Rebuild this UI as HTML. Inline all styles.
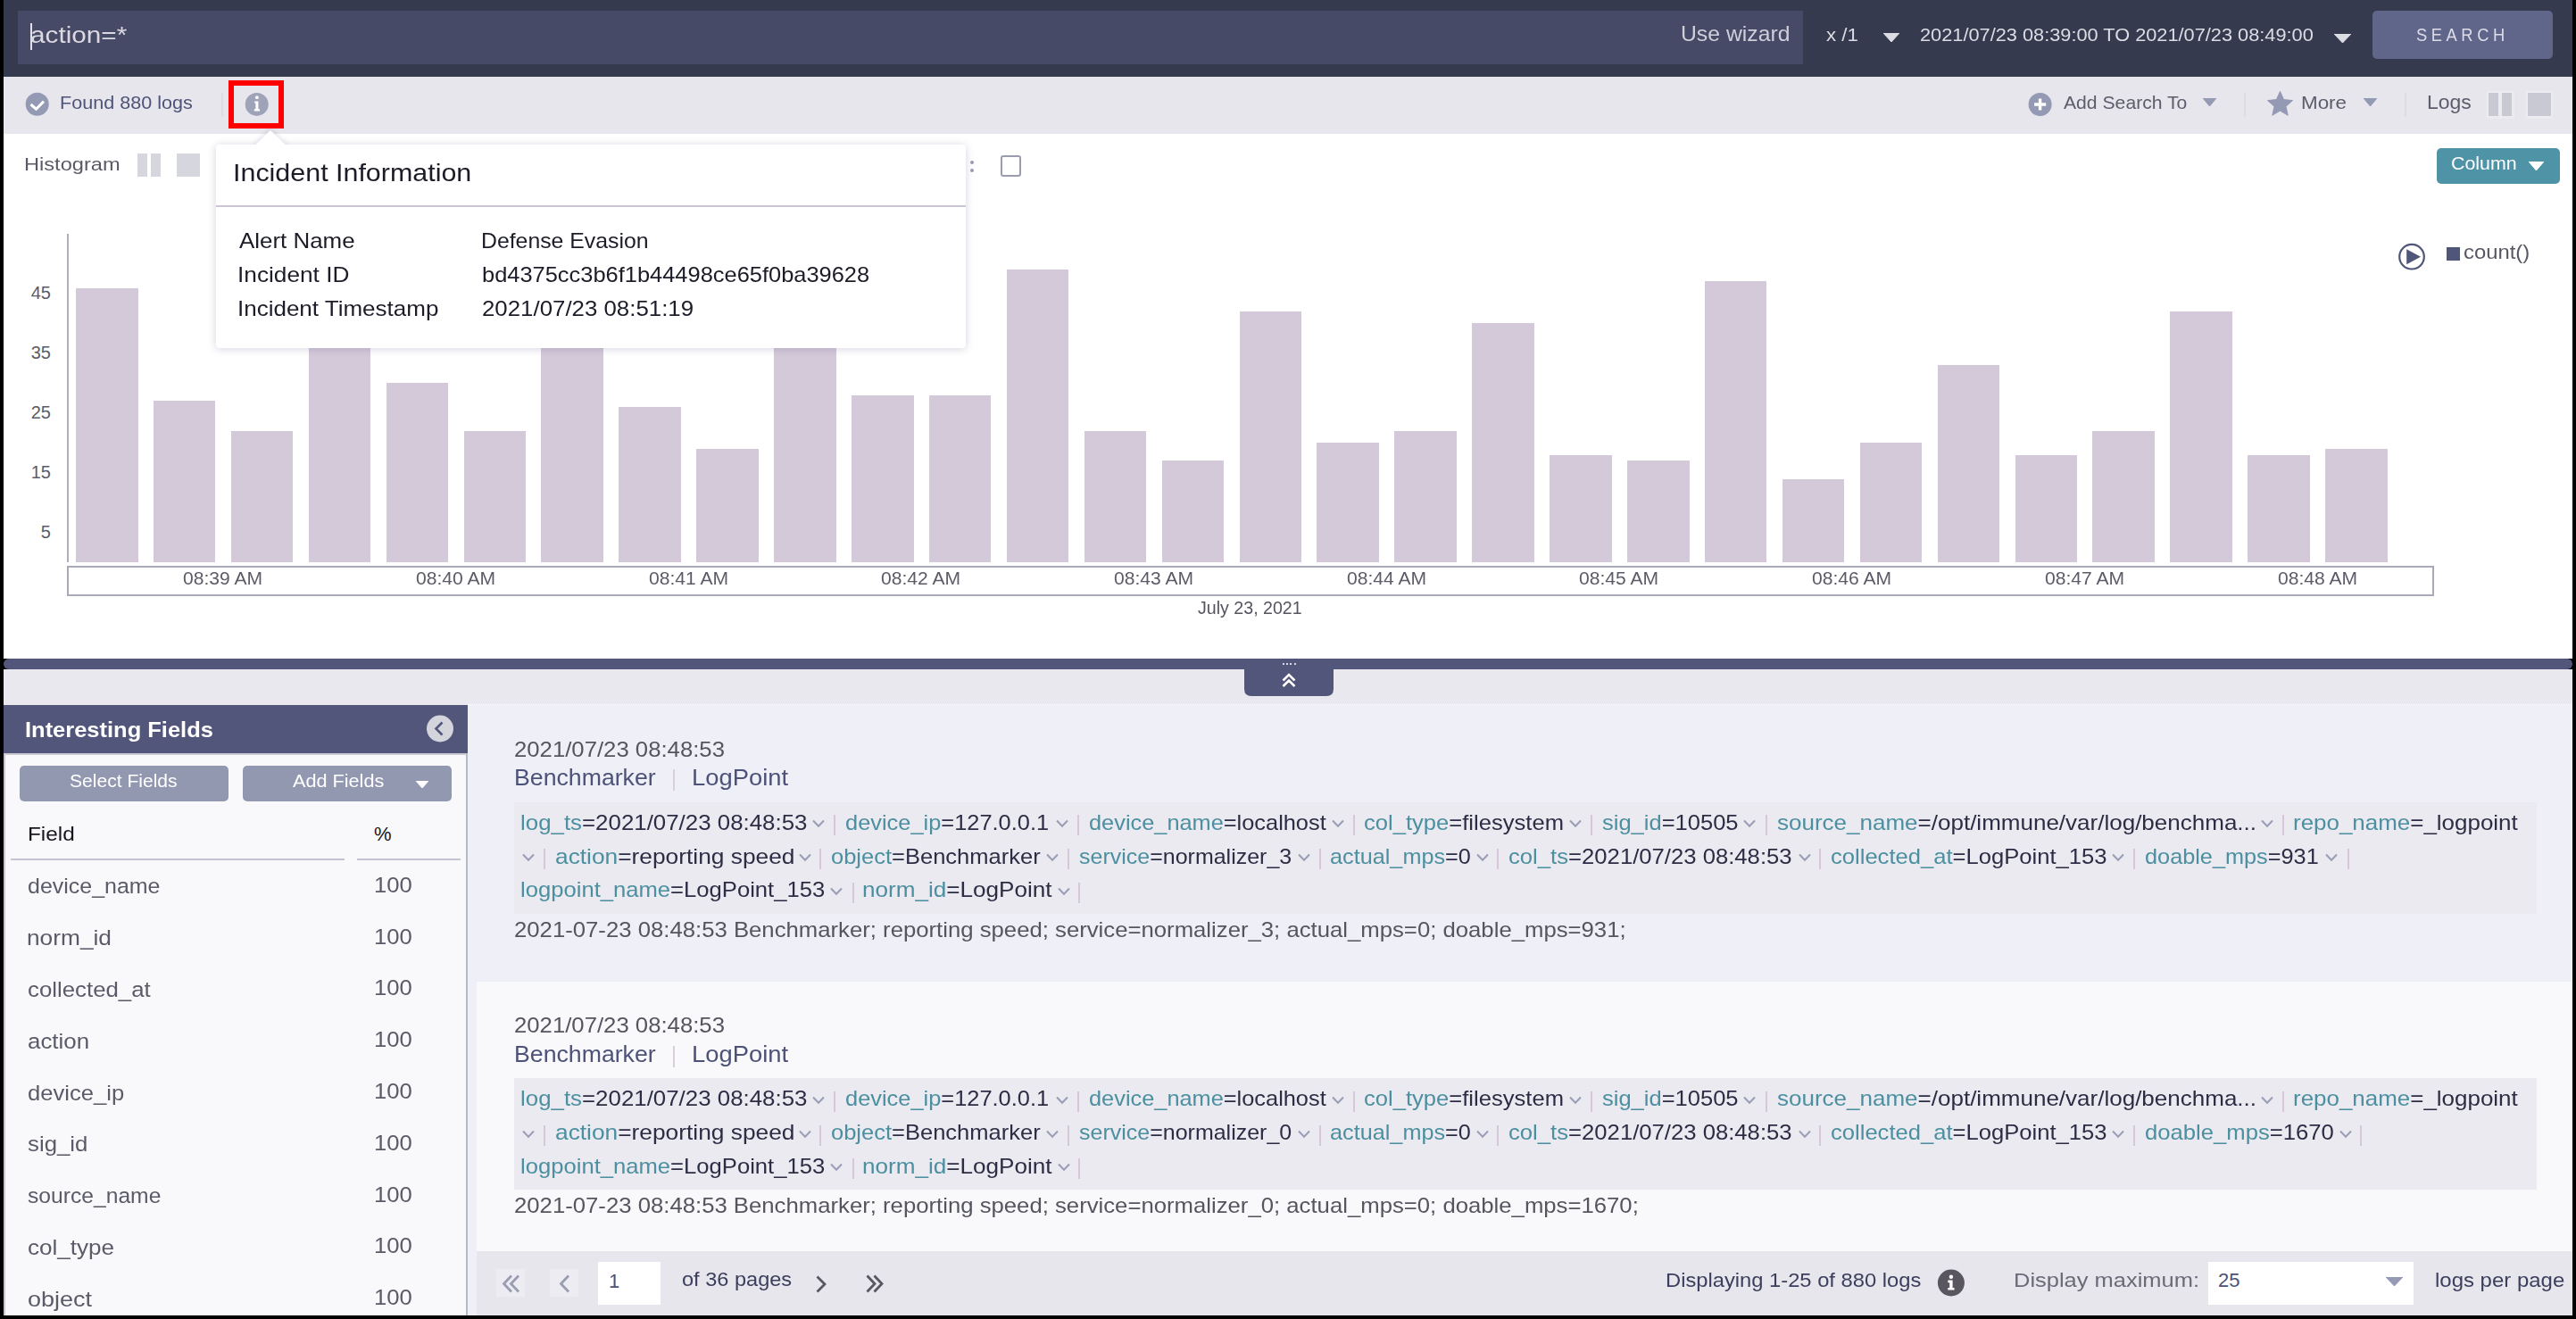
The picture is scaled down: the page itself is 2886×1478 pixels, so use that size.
<!DOCTYPE html>
<html><head><meta charset="utf-8"><style>
html,body{margin:0;padding:0;width:2886px;height:1478px;overflow:hidden;background:#000}
body>div,body>svg{position:absolute;box-sizing:content-box}
body>div{white-space:pre;font-family:'Liberation Sans', sans-serif}
</style></head><body>
<div style="left:0px;top:0px;width:2886px;height:1478px;background:#000;"></div>
<div style="left:4px;top:0px;width:2878px;height:86px;background:#363a4f;"></div>
<div style="left:20px;top:12px;width:2000px;height:60px;background:#464a66;"></div>
<div style="left:34px;top:26px;width:2px;height:30px;background:#e4e0ea;"></div>
<div style="left:34.31px;top:26.85px;font-size:25px;line-height:25px;color:#dcd8e2;font-weight:400;transform:scaleX(1.1889);transform-origin:0 0;">action=*</div>
<div style="left:1882.94px;top:25.70px;font-size:24px;line-height:24px;color:#cfcfda;font-weight:400;transform:scaleX(1.0313);transform-origin:0 0;">Use wizard</div>
<div style="left:2045.50px;top:29.08px;font-size:20px;line-height:20px;color:#dcdce4;font-weight:400;transform:scaleX(1.1129);transform-origin:0 0;">x /1</div>
<svg style="left:2110px;top:37px" width="18" height="10" viewBox="0 0 18 10"><path d="M0 0 L18 0 L9.0 10 Z" fill="#dcdce4" stroke="#dcdce4" stroke-width="1" stroke-linejoin="round"/></svg>
<div style="left:2151.41px;top:29.08px;font-size:20px;line-height:20px;color:#dcdce4;font-weight:400;transform:scaleX(1.0879);transform-origin:0 0;">2021/07/23 08:39:00 TO 2021/07/23 08:49:00</div>
<svg style="left:2615px;top:38px" width="19" height="10" viewBox="0 0 19 10"><path d="M0 0 L19 0 L9.5 10 Z" fill="#dcdce4" stroke="#dcdce4" stroke-width="1" stroke-linejoin="round"/></svg>
<div style="left:2658px;top:12px;width:202px;height:54px;background:#60668a;border-radius:5px"></div>
<div style="left:2707.08px;top:29.38px;font-size:20px;line-height:20px;color:#dcdce8;font-weight:400;transform:scaleX(0.9151);transform-origin:0 0;letter-spacing:5px">SEARCH</div>
<div style="left:4px;top:86px;width:2878px;height:64px;background:#e6e6ec;"></div>
<svg style="left:28px;top:103px" width="28" height="28" viewBox="0 0 28 28"><circle cx="13.7" cy="13.8" r="13" fill="#9499b4"/><path d="M6.5 14 L12.5 19.2 L21 10.6" fill="none" stroke="#fff" stroke-width="3"/></svg>
<div style="left:66.84px;top:105.08px;font-size:20px;line-height:20px;color:#4e5377;font-weight:400;transform:scaleX(1.0785);transform-origin:0 0;">Found 880 logs</div>
<div style="left:248px;top:104px;width:1.5px;height:27px;background:#dcdce3;"></div>
<svg style="left:274px;top:103px" width="28" height="28" viewBox="0 0 28 28"><circle cx="13.7" cy="13.9" r="13" fill="#9ea3b9"/><circle cx="13.9" cy="6.2" r="1.9" fill="#fff"/><path d="M11.2 10.4 H15.4 V19.2 H17 V21.4 H10.8 V19.2 H12.4 V12.4 H11.2 Z" fill="#fff"/></svg>
<div style="left:256px;top:90px;width:50px;height:42px;border:6px solid #ff0000"></div>
<svg style="left:2272px;top:104px" width="28" height="28" viewBox="0 0 28 28"><circle cx="13.6" cy="13" r="13" fill="#9499b4"/><path d="M13.6 6.5 V19.5 M7 13 H20.2" stroke="#fff" stroke-width="3.4"/></svg>
<div style="left:2312.00px;top:104.23px;font-size:21px;line-height:21px;color:#5c5c6c;font-weight:400;transform:scaleX(1.0073);transform-origin:0 0;">Add Search To</div>
<svg style="left:2468px;top:110px" width="15" height="9" viewBox="0 0 15 9"><path d="M0 0 L15 0 L7.5 9 Z" fill="#9499b4" stroke="#9499b4" stroke-width="1" stroke-linejoin="round"/></svg>
<div style="left:2514px;top:104px;width:1.5px;height:27px;background:#dcdce3;"></div>
<svg style="left:2539px;top:101px" width="31" height="31" viewBox="0 0 31 31"><path d="M15.5 1.5 L19.6 10.6 L29.5 11.6 L22 18.3 L24.2 28.2 L15.5 23.1 L6.8 28.2 L9 18.3 L1.5 11.6 L11.4 10.6 Z" fill="#9499b4" stroke="#9499b4" stroke-width="1" stroke-linejoin="round"/></svg>
<div style="left:2577.87px;top:104.23px;font-size:21px;line-height:21px;color:#5c5c6c;font-weight:400;transform:scaleX(1.0667);transform-origin:0 0;">More</div>
<svg style="left:2648px;top:110px" width="15" height="9" viewBox="0 0 15 9"><path d="M0 0 L15 0 L7.5 9 Z" fill="#9499b4" stroke="#9499b4" stroke-width="1" stroke-linejoin="round"/></svg>
<div style="left:2694px;top:104px;width:1.5px;height:27px;background:#dcdce3;"></div>
<div style="left:2718.91px;top:103.89px;font-size:22px;line-height:22px;color:#5c5c6c;font-weight:400;transform:scaleX(1.0444);transform-origin:0 0;">Logs</div>
<div style="left:2786px;top:102px;width:31px;height:31px;background:#ebebf0;"></div>
<div style="left:2788px;top:104px;width:11px;height:25.7px;background:#c9c9d4;"></div>
<div style="left:2803px;top:104px;width:11px;height:25.7px;background:#c9c9d4;"></div>
<div style="left:2830px;top:102px;width:30px;height:31px;background:#ebebf0;"></div>
<div style="left:2831.7px;top:104px;width:26.1px;height:25.7px;background:#c9c9d4;"></div>
<div style="left:4px;top:150px;width:2878px;height:588px;background:#fff;"></div>
<div style="left:26.75px;top:172.73px;font-size:21px;line-height:21px;color:#5a5a66;font-weight:400;transform:scaleX(1.1247);transform-origin:0 0;">Histogram</div>
<div style="left:154px;top:172px;width:10.5px;height:25.8px;background:#d6d6de;"></div>
<div style="left:169px;top:172px;width:10.7px;height:25.8px;background:#d6d6de;"></div>
<div style="left:198px;top:172px;width:26px;height:25.8px;background:#d6d6de;"></div>
<div style="left:1087px;top:180px;width:4px;height:4px;border-radius:2px;background:#9a9cb4"></div>
<div style="left:1087px;top:189px;width:4px;height:4px;border-radius:2px;background:#9a9cb4"></div>
<div style="left:1120.5px;top:174.3px;width:19px;height:19.5px;border:2px solid #9a9cb0;border-radius:3px"></div>
<div style="left:2730px;top:166px;width:138px;height:39.5px;background:#4f93a6;border-radius:5px"></div>
<div style="left:2745.68px;top:172.23px;font-size:21px;line-height:21px;color:#ffffff;font-weight:400;transform:scaleX(1.0186);transform-origin:0 0;">Column</div>
<svg style="left:2833px;top:181px" width="17" height="10" viewBox="0 0 17 10"><path d="M0 0 L17 0 L8.5 10 Z" fill="#ffffff" stroke="#ffffff" stroke-width="1" stroke-linejoin="round"/></svg>
<div style="left:75px;top:262px;width:2px;height:368px;background:#aeb0be;"></div>
<div style="left:34.70px;top:318.48px;font-size:20px;line-height:20px;color:#5c5c68;font-weight:400;">45</div>
<div style="left:34.70px;top:385.08px;font-size:20px;line-height:20px;color:#5c5c68;font-weight:400;">35</div>
<div style="left:34.70px;top:452.08px;font-size:20px;line-height:20px;color:#5c5c68;font-weight:400;">25</div>
<div style="left:34.70px;top:519.08px;font-size:20px;line-height:20px;color:#5c5c68;font-weight:400;">15</div>
<div style="left:45.70px;top:586.08px;font-size:20px;line-height:20px;color:#5c5c68;font-weight:400;">5</div>
<div style="left:85.0px;top:322.5px;width:69.5px;height:307.5px;background:#d4c9d9;"></div>
<div style="left:171.9px;top:449px;width:69.5px;height:181px;background:#d4c9d9;"></div>
<div style="left:258.8px;top:483px;width:69.5px;height:147px;background:#d4c9d9;"></div>
<div style="left:345.7px;top:300px;width:69.5px;height:330px;background:#d4c9d9;"></div>
<div style="left:432.6px;top:429px;width:69.5px;height:201px;background:#d4c9d9;"></div>
<div style="left:519.5px;top:483px;width:69.5px;height:147px;background:#d4c9d9;"></div>
<div style="left:606.4px;top:300px;width:69.5px;height:330px;background:#d4c9d9;"></div>
<div style="left:693.3px;top:455.7px;width:69.5px;height:174.3px;background:#d4c9d9;"></div>
<div style="left:780.2px;top:503px;width:69.5px;height:127px;background:#d4c9d9;"></div>
<div style="left:867.1px;top:300px;width:69.5px;height:330px;background:#d4c9d9;"></div>
<div style="left:954.0px;top:442.8px;width:69.5px;height:187.2px;background:#d4c9d9;"></div>
<div style="left:1040.9px;top:442.8px;width:69.5px;height:187.2px;background:#d4c9d9;"></div>
<div style="left:1127.8px;top:302.2px;width:69.5px;height:327.8px;background:#d4c9d9;"></div>
<div style="left:1214.7px;top:483px;width:69.5px;height:147px;background:#d4c9d9;"></div>
<div style="left:1301.6px;top:516px;width:69.5px;height:114px;background:#d4c9d9;"></div>
<div style="left:1388.5px;top:349px;width:69.5px;height:281px;background:#d4c9d9;"></div>
<div style="left:1475.4px;top:496px;width:69.5px;height:134px;background:#d4c9d9;"></div>
<div style="left:1562.3px;top:483px;width:69.5px;height:147px;background:#d4c9d9;"></div>
<div style="left:1649.2px;top:362px;width:69.5px;height:268px;background:#d4c9d9;"></div>
<div style="left:1736.1px;top:510px;width:69.5px;height:120px;background:#d4c9d9;"></div>
<div style="left:1823.0px;top:516px;width:69.5px;height:114px;background:#d4c9d9;"></div>
<div style="left:1909.9px;top:315px;width:69.5px;height:315px;background:#d4c9d9;"></div>
<div style="left:1996.8px;top:537px;width:69.5px;height:93px;background:#d4c9d9;"></div>
<div style="left:2083.7px;top:496px;width:69.5px;height:134px;background:#d4c9d9;"></div>
<div style="left:2170.6px;top:409px;width:69.5px;height:221px;background:#d4c9d9;"></div>
<div style="left:2257.5px;top:510px;width:69.5px;height:120px;background:#d4c9d9;"></div>
<div style="left:2344.4px;top:483px;width:69.5px;height:147px;background:#d4c9d9;"></div>
<div style="left:2431.3px;top:349.2px;width:69.5px;height:280.8px;background:#d4c9d9;"></div>
<div style="left:2518.2px;top:510px;width:69.5px;height:120px;background:#d4c9d9;"></div>
<div style="left:2605.1px;top:503.2px;width:69.5px;height:126.8px;background:#d4c9d9;"></div>
<div style="left:75px;top:633.5px;width:2648px;height:30px;border:2px solid #a8aab9"></div>
<div style="left:205.25px;top:638.08px;font-size:20px;line-height:20px;color:#5c5c68;font-weight:400;transform:scaleX(1.0537);transform-origin:0 0;">08:39 AM</div>
<div style="left:465.95px;top:638.08px;font-size:20px;line-height:20px;color:#5c5c68;font-weight:400;transform:scaleX(1.0537);transform-origin:0 0;">08:40 AM</div>
<div style="left:726.65px;top:638.08px;font-size:20px;line-height:20px;color:#5c5c68;font-weight:400;transform:scaleX(1.0537);transform-origin:0 0;">08:41 AM</div>
<div style="left:987.35px;top:638.08px;font-size:20px;line-height:20px;color:#5c5c68;font-weight:400;transform:scaleX(1.0537);transform-origin:0 0;">08:42 AM</div>
<div style="left:1248.05px;top:638.08px;font-size:20px;line-height:20px;color:#5c5c68;font-weight:400;transform:scaleX(1.0537);transform-origin:0 0;">08:43 AM</div>
<div style="left:1508.75px;top:638.08px;font-size:20px;line-height:20px;color:#5c5c68;font-weight:400;transform:scaleX(1.0537);transform-origin:0 0;">08:44 AM</div>
<div style="left:1769.45px;top:638.08px;font-size:20px;line-height:20px;color:#5c5c68;font-weight:400;transform:scaleX(1.0537);transform-origin:0 0;">08:45 AM</div>
<div style="left:2030.15px;top:638.08px;font-size:20px;line-height:20px;color:#5c5c68;font-weight:400;transform:scaleX(1.0537);transform-origin:0 0;">08:46 AM</div>
<div style="left:2290.85px;top:638.08px;font-size:20px;line-height:20px;color:#5c5c68;font-weight:400;transform:scaleX(1.0537);transform-origin:0 0;">08:47 AM</div>
<div style="left:2551.55px;top:638.08px;font-size:20px;line-height:20px;color:#5c5c68;font-weight:400;transform:scaleX(1.0537);transform-origin:0 0;">08:48 AM</div>
<div style="left:1342.00px;top:671.28px;font-size:20px;line-height:20px;color:#55555f;font-weight:400;transform:scaleX(0.9805);transform-origin:0 0;">July 23, 2021</div>
<svg style="left:2686px;top:272px" width="32" height="32" viewBox="0 0 32 32"><circle cx="16" cy="15.7" r="13.8" fill="none" stroke="#50557a" stroke-width="2.2"/><path d="M10.2 7.2 L26 15.7 L10.2 24.2 Z" fill="#50557a"/></svg>
<div style="left:2741px;top:277px;width:14.6px;height:14.7px;background:#50557a;"></div>
<div style="left:2760.42px;top:271.69px;font-size:22px;line-height:22px;color:#585864;font-weight:400;transform:scaleX(1.0833);transform-origin:0 0;">count()</div>
<div style="left:242px;top:162px;width:840px;height:228px;background:#fff;border-radius:4px;box-shadow:0 1px 10px rgba(60,60,110,0.22)"></div>
<svg style="left:270px;top:135px" width="66" height="32" viewBox="0 0 66 32"><defs><filter id="f1" x="-50%" y="-50%" width="200%" height="200%"><feGaussianBlur stdDeviation="2.5"/></filter></defs><path d="M14 28 L33 10 L52 28 Z" fill="rgba(60,60,110,0.18)" filter="url(#f1)"/><path d="M13 30 L33 11 L53 30 Z" fill="#fff"/></svg>
<div style="left:242px;top:162px;width:840px;height:38px;background:#fff;border-radius:4px 4px 0 0"></div>
<div style="left:260.83px;top:180.31px;font-size:28px;line-height:28px;color:#1c1c28;font-weight:400;transform:scaleX(1.0868);transform-origin:0 0;">Incident Information</div>
<div style="left:242px;top:229.5px;width:840px;height:2.3px;background:#cac4d4;"></div>
<div style="left:268.00px;top:258.00px;font-size:24px;line-height:24px;color:#1c1c28;font-weight:400;transform:scaleX(1.0798);transform-origin:0 0;">Alert Name</div>
<div style="left:538.63px;top:258.00px;font-size:24px;line-height:24px;color:#1c1c28;font-weight:400;transform:scaleX(1.0337);transform-origin:0 0;">Defense Evasion</div>
<div style="left:265.81px;top:295.90px;font-size:24px;line-height:24px;color:#1c1c28;font-weight:400;transform:scaleX(1.0929);transform-origin:0 0;">Incident ID</div>
<div style="left:539.64px;top:295.90px;font-size:24px;line-height:24px;color:#1c1c28;font-weight:400;transform:scaleX(1.0596);transform-origin:0 0;">bd4375cc3b6f1b44498ce65f0ba39628</div>
<div style="left:265.83px;top:334.00px;font-size:24px;line-height:24px;color:#1c1c28;font-weight:400;transform:scaleX(1.0829);transform-origin:0 0;">Incident Timestamp</div>
<div style="left:539.62px;top:334.00px;font-size:24px;line-height:24px;color:#1c1c28;font-weight:400;transform:scaleX(1.0766);transform-origin:0 0;">2021/07/23 08:51:19</div>
<div style="left:4px;top:750px;width:2878px;height:724px;background:#e8e8ee;"></div>
<div style="left:4px;top:738px;width:2878px;height:12px;background:#52567a;border-radius:6px"></div>
<svg style="left:1394px;top:748px" width="100" height="32" viewBox="0 0 100 32"><path d="M0 0 H100 V24 Q100 32 92 32 H8 Q0 32 0 24 Z" fill="#52567a"/><path d="M43.5 14.5 L50 8 L56.5 14.5 M43.5 21 L50 14.5 L56.5 21" fill="none" stroke="#fff" stroke-width="2.5"/></svg>
<div style="left:1437.0px;top:743px;width:2.0px;height:2px;background:#d8d8e4;"></div>
<div style="left:1441.2px;top:743px;width:2.0px;height:2px;background:#d8d8e4;"></div>
<div style="left:1445.4px;top:743px;width:2.0px;height:2px;background:#d8d8e4;"></div>
<div style="left:1449.6px;top:743px;width:2.0px;height:2px;background:#d8d8e4;"></div>
<div style="left:4px;top:790px;width:520px;height:54px;background:#52567a;"></div>
<div style="left:28.28px;top:805.90px;font-size:24px;line-height:24px;color:#ffffff;font-weight:700;transform:scaleX(1.0612);transform-origin:0 0;">Interesting Fields</div>
<svg style="left:477px;top:801px" width="32" height="32" viewBox="0 0 32 32"><circle cx="16" cy="15.5" r="15" fill="#d4d4dc"/><path d="M18.5 8.5 L11.5 15.5 L18.5 22.5" fill="none" stroke="#52567a" stroke-width="2.6"/></svg>
<div style="left:4px;top:844px;width:520px;height:630px;background:#f9f9fb;"></div>
<div style="left:4px;top:844px;width:520px;height:2px;background:#cbcbd6;"></div>
<div style="left:4px;top:844px;width:2px;height:630px;background:#c8c8d4;"></div>
<div style="left:522px;top:844px;width:2px;height:630px;background:#b8bac8;"></div>
<div style="left:22px;top:858px;width:234px;height:39.5px;background:#9398b1;border-radius:5px"></div>
<div style="left:272px;top:858px;width:234px;height:39.5px;background:#9398b1;border-radius:5px"></div>
<div style="left:77.95px;top:865.08px;font-size:20px;line-height:20px;color:#ffffff;font-weight:400;transform:scaleX(1.0531);transform-origin:0 0;">Select Fields</div>
<div style="left:327.70px;top:865.08px;font-size:20px;line-height:20px;color:#ffffff;font-weight:400;transform:scaleX(1.0819);transform-origin:0 0;">Add Fields</div>
<svg style="left:466px;top:875px" width="14" height="8" viewBox="0 0 14 8"><path d="M0 0 L14 0 L7.0 8 Z" fill="#ffffff" stroke="#ffffff" stroke-width="1" stroke-linejoin="round"/></svg>
<div style="left:30.79px;top:923.69px;font-size:22px;line-height:22px;color:#16161e;font-weight:400;transform:scaleX(1.1067);transform-origin:0 0;">Field</div>
<div style="left:419.00px;top:923.69px;font-size:22px;line-height:22px;color:#16161e;font-weight:400;">%</div>
<div style="left:12px;top:961.5px;width:374px;height:2.0px;background:#c4c4d0;"></div>
<div style="left:400px;top:961.5px;width:116px;height:2.0px;background:#c4c4d0;"></div>
<div style="left:31.48px;top:981.37px;font-size:24.5px;line-height:24.5px;color:#5a5a68;font-weight:400;transform:scaleX(1.0187);transform-origin:0 0;">device_name</div>
<div style="left:419.31px;top:979.87px;font-size:24.5px;line-height:24.5px;color:#5a5a68;font-weight:400;transform:scaleX(1.0474);transform-origin:0 0;">100</div>
<div style="left:30.35px;top:1039.17px;font-size:24.5px;line-height:24.5px;color:#5a5a68;font-weight:400;transform:scaleX(1.0729);transform-origin:0 0;">norm_id</div>
<div style="left:419.31px;top:1037.67px;font-size:24.5px;line-height:24.5px;color:#5a5a68;font-weight:400;transform:scaleX(1.0474);transform-origin:0 0;">100</div>
<div style="left:31.45px;top:1096.97px;font-size:24.5px;line-height:24.5px;color:#5a5a68;font-weight:400;transform:scaleX(1.0531);transform-origin:0 0;">collected_at</div>
<div style="left:419.31px;top:1095.47px;font-size:24.5px;line-height:24.5px;color:#5a5a68;font-weight:400;transform:scaleX(1.0474);transform-origin:0 0;">100</div>
<div style="left:31.44px;top:1154.77px;font-size:24.5px;line-height:24.5px;color:#5a5a68;font-weight:400;transform:scaleX(1.0556);transform-origin:0 0;">action</div>
<div style="left:419.31px;top:1153.27px;font-size:24.5px;line-height:24.5px;color:#5a5a68;font-weight:400;transform:scaleX(1.0474);transform-origin:0 0;">100</div>
<div style="left:31.45px;top:1212.57px;font-size:24.5px;line-height:24.5px;color:#5a5a68;font-weight:400;transform:scaleX(1.0451);transform-origin:0 0;">device_ip</div>
<div style="left:419.31px;top:1211.07px;font-size:24.5px;line-height:24.5px;color:#5a5a68;font-weight:400;transform:scaleX(1.0474);transform-origin:0 0;">100</div>
<div style="left:31.45px;top:1270.37px;font-size:24.5px;line-height:24.5px;color:#5a5a68;font-weight:400;transform:scaleX(1.0532);transform-origin:0 0;">sig_id</div>
<div style="left:419.31px;top:1268.87px;font-size:24.5px;line-height:24.5px;color:#5a5a68;font-weight:400;transform:scaleX(1.0474);transform-origin:0 0;">100</div>
<div style="left:31.49px;top:1328.17px;font-size:24.5px;line-height:24.5px;color:#5a5a68;font-weight:400;transform:scaleX(1.0062);transform-origin:0 0;">source_name</div>
<div style="left:419.31px;top:1326.67px;font-size:24.5px;line-height:24.5px;color:#5a5a68;font-weight:400;transform:scaleX(1.0474);transform-origin:0 0;">100</div>
<div style="left:31.44px;top:1385.97px;font-size:24.5px;line-height:24.5px;color:#5a5a68;font-weight:400;transform:scaleX(1.0640);transform-origin:0 0;">col_type</div>
<div style="left:419.31px;top:1384.47px;font-size:24.5px;line-height:24.5px;color:#5a5a68;font-weight:400;transform:scaleX(1.0474);transform-origin:0 0;">100</div>
<div style="left:31.40px;top:1443.77px;font-size:24.5px;line-height:24.5px;color:#5a5a68;font-weight:400;transform:scaleX(1.1016);transform-origin:0 0;">object</div>
<div style="left:419.31px;top:1442.27px;font-size:24.5px;line-height:24.5px;color:#5a5a68;font-weight:400;transform:scaleX(1.0474);transform-origin:0 0;">100</div>
<div style="left:524px;top:790px;width:2358px;height:684px;background:#efeff8;"></div>
<div style="left:524px;top:789px;width:2358px;height:0;border-top:1.5px dotted #ffffff"></div>
<div style="left:534px;top:1100px;width:2348px;height:302px;background:#f9f9fb;"></div>
<div style="left:575.73px;top:827.80px;font-size:24px;line-height:24px;color:#55555f;font-weight:400;transform:scaleX(1.0716);transform-origin:0 0;">2021/07/23 08:48:53</div>
<div style="left:575.95px;top:858.30px;font-size:26px;line-height:26px;color:#4d5278;font-weight:400;transform:scaleX(1.0263);transform-origin:0 0;">Benchmarker</div>
<div style="left:753.5px;top:862px;width:2.0px;height:24px;background:#dccfdc;"></div>
<div style="left:774.90px;top:858.30px;font-size:26px;line-height:26px;color:#4d5278;font-weight:400;transform:scaleX(1.0525);transform-origin:0 0;">LogPoint</div>
<div style="left:576px;top:898.5px;width:2266px;height:125.3px;background:#eaeaf0;"></div>
<div style="left:583.14px;top:909.70px;font-size:24px;line-height:24px;color:#2c2c44;font-weight:400;transform:scaleX(1.0776);transform-origin:0 0;"><span style="color:#4b8fa0">log_ts</span><span style="color:#2c2c44">=2021/07/23 08:48:53</span></div>
<svg style="left:910px;top:918px" width="14" height="10" viewBox="0 0 14 10"><path d="M1 1.5 L7 7.8 L13 1.5" fill="none" stroke="#9a9db6" stroke-width="2"/></svg>
<div style="left:934.1px;top:913px;width:2.0px;height:23px;background:#d6c8d8;"></div>
<div style="left:946.94px;top:909.70px;font-size:24px;line-height:24px;color:#2c2c44;font-weight:400;transform:scaleX(1.0584);transform-origin:0 0;"><span style="color:#4b8fa0">device_ip</span><span style="color:#2c2c44">=127.0.0.1</span></div>
<svg style="left:1183px;top:918px" width="14" height="10" viewBox="0 0 14 10"><path d="M1 1.5 L7 7.8 L13 1.5" fill="none" stroke="#9a9db6" stroke-width="2"/></svg>
<div style="left:1206.5px;top:913px;width:2.0px;height:23px;background:#d6c8d8;"></div>
<div style="left:1220.14px;top:909.70px;font-size:24px;line-height:24px;color:#2c2c44;font-weight:400;transform:scaleX(1.0564);transform-origin:0 0;"><span style="color:#4b8fa0">device_name</span><span style="color:#2c2c44">=localhost</span></div>
<svg style="left:1492px;top:918px" width="14" height="10" viewBox="0 0 14 10"><path d="M1 1.5 L7 7.8 L13 1.5" fill="none" stroke="#9a9db6" stroke-width="2"/></svg>
<div style="left:1515.6px;top:913px;width:2.0px;height:23px;background:#d6c8d8;"></div>
<div style="left:1528.23px;top:909.70px;font-size:24px;line-height:24px;color:#2c2c44;font-weight:400;transform:scaleX(1.0659);transform-origin:0 0;"><span style="color:#4b8fa0">col_type</span><span style="color:#2c2c44">=filesystem</span></div>
<svg style="left:1758px;top:918px" width="14" height="10" viewBox="0 0 14 10"><path d="M1 1.5 L7 7.8 L13 1.5" fill="none" stroke="#9a9db6" stroke-width="2"/></svg>
<div style="left:1782px;top:913px;width:2px;height:23px;background:#d6c8d8;"></div>
<div style="left:1794.94px;top:909.70px;font-size:24px;line-height:24px;color:#2c2c44;font-weight:400;transform:scaleX(1.0634);transform-origin:0 0;"><span style="color:#4b8fa0">sig_id</span><span style="color:#2c2c44">=10505</span></div>
<svg style="left:1953px;top:918px" width="14" height="10" viewBox="0 0 14 10"><path d="M1 1.5 L7 7.8 L13 1.5" fill="none" stroke="#9a9db6" stroke-width="2"/></svg>
<div style="left:1978px;top:913px;width:2px;height:23px;background:#d6c8d8;"></div>
<div style="left:1990.72px;top:909.70px;font-size:24px;line-height:24px;color:#2c2c44;font-weight:400;transform:scaleX(1.0836);transform-origin:0 0;"><span style="color:#4b8fa0">source_name</span><span style="color:#2c2c44">=/opt/immune/var/log/benchma...</span></div>
<svg style="left:2533px;top:918px" width="14" height="10" viewBox="0 0 14 10"><path d="M1 1.5 L7 7.8 L13 1.5" fill="none" stroke="#9a9db6" stroke-width="2"/></svg>
<div style="left:2557px;top:913px;width:2px;height:23px;background:#d6c8d8;"></div>
<div style="left:2569.34px;top:909.70px;font-size:24px;line-height:24px;color:#2c2c44;font-weight:400;transform:scaleX(1.0810);transform-origin:0 0;"><span style="color:#4b8fa0">repo_name</span><span style="color:#2c2c44">=_logpoint</span></div>
<svg style="left:585.3px;top:956px" width="14" height="10" viewBox="0 0 14 10"><path d="M1 1.5 L7 7.8 L13 1.5" fill="none" stroke="#9a9db6" stroke-width="2"/></svg>
<div style="left:609px;top:951px;width:2px;height:23px;background:#d6c8d8;"></div>
<div style="left:621.70px;top:947.70px;font-size:24px;line-height:24px;color:#2c2c44;font-weight:400;transform:scaleX(1.0963);transform-origin:0 0;"><span style="color:#4b8fa0">action</span><span style="color:#2c2c44">=reporting speed</span></div>
<svg style="left:894.7px;top:956px" width="14" height="10" viewBox="0 0 14 10"><path d="M1 1.5 L7 7.8 L13 1.5" fill="none" stroke="#9a9db6" stroke-width="2"/></svg>
<div style="left:918.3px;top:951px;width:2.0px;height:23px;background:#d6c8d8;"></div>
<div style="left:931.14px;top:947.70px;font-size:24px;line-height:24px;color:#2c2c44;font-weight:400;transform:scaleX(1.0627);transform-origin:0 0;"><span style="color:#4b8fa0">object</span><span style="color:#2c2c44">=Benchmarker</span></div>
<svg style="left:1172.4px;top:956px" width="14" height="10" viewBox="0 0 14 10"><path d="M1 1.5 L7 7.8 L13 1.5" fill="none" stroke="#9a9db6" stroke-width="2"/></svg>
<div style="left:1196px;top:951px;width:2px;height:23px;background:#d6c8d8;"></div>
<div style="left:1209.26px;top:947.70px;font-size:24px;line-height:24px;color:#2c2c44;font-weight:400;transform:scaleX(1.0414);transform-origin:0 0;"><span style="color:#4b8fa0">service</span><span style="color:#2c2c44">=normalizer_3</span></div>
<svg style="left:1454px;top:956px" width="14" height="10" viewBox="0 0 14 10"><path d="M1 1.5 L7 7.8 L13 1.5" fill="none" stroke="#9a9db6" stroke-width="2"/></svg>
<div style="left:1477.5px;top:951px;width:2.0px;height:23px;background:#d6c8d8;"></div>
<div style="left:1490.25px;top:947.70px;font-size:24px;line-height:24px;color:#2c2c44;font-weight:400;transform:scaleX(1.0520);transform-origin:0 0;"><span style="color:#4b8fa0">actual_mps</span><span style="color:#2c2c44">=0</span></div>
<svg style="left:1654px;top:956px" width="14" height="10" viewBox="0 0 14 10"><path d="M1 1.5 L7 7.8 L13 1.5" fill="none" stroke="#9a9db6" stroke-width="2"/></svg>
<div style="left:1677.3px;top:951px;width:2.0px;height:23px;background:#d6c8d8;"></div>
<div style="left:1690.23px;top:947.70px;font-size:24px;line-height:24px;color:#2c2c44;font-weight:400;transform:scaleX(1.0695);transform-origin:0 0;"><span style="color:#4b8fa0">col_ts</span><span style="color:#2c2c44">=2021/07/23 08:48:53</span></div>
<svg style="left:2015px;top:956px" width="14" height="10" viewBox="0 0 14 10"><path d="M1 1.5 L7 7.8 L13 1.5" fill="none" stroke="#9a9db6" stroke-width="2"/></svg>
<div style="left:2037.9px;top:951px;width:2.0px;height:23px;background:#d6c8d8;"></div>
<div style="left:2051.13px;top:947.70px;font-size:24px;line-height:24px;color:#2c2c44;font-weight:400;transform:scaleX(1.0660);transform-origin:0 0;"><span style="color:#4b8fa0">collected_at</span><span style="color:#2c2c44">=LogPoint_153</span></div>
<svg style="left:2366px;top:956px" width="14" height="10" viewBox="0 0 14 10"><path d="M1 1.5 L7 7.8 L13 1.5" fill="none" stroke="#9a9db6" stroke-width="2"/></svg>
<div style="left:2389.8px;top:951px;width:2.0px;height:23px;background:#d6c8d8;"></div>
<div style="left:2403.15px;top:947.70px;font-size:24px;line-height:24px;color:#2c2c44;font-weight:400;transform:scaleX(1.0536);transform-origin:0 0;"><span style="color:#4b8fa0">doable_mps</span><span style="color:#2c2c44">=931</span></div>
<svg style="left:2605px;top:956px" width="14" height="10" viewBox="0 0 14 10"><path d="M1 1.5 L7 7.8 L13 1.5" fill="none" stroke="#9a9db6" stroke-width="2"/></svg>
<div style="left:2630px;top:951px;width:2px;height:23px;background:#d6c8d8;"></div>
<div style="left:583.16px;top:985.40px;font-size:24px;line-height:24px;color:#2c2c44;font-weight:400;transform:scaleX(1.0675);transform-origin:0 0;"><span style="color:#4b8fa0">logpoint_name</span><span style="color:#2c2c44">=LogPoint_153</span></div>
<svg style="left:930.4px;top:993.7px" width="14" height="10" viewBox="0 0 14 10"><path d="M1 1.5 L7 7.8 L13 1.5" fill="none" stroke="#9a9db6" stroke-width="2"/></svg>
<div style="left:955px;top:988.7px;width:2px;height:23.0px;background:#d6c8d8;"></div>
<div style="left:966.42px;top:985.40px;font-size:24px;line-height:24px;color:#2c2c44;font-weight:400;transform:scaleX(1.0876);transform-origin:0 0;"><span style="color:#4b8fa0">norm_id</span><span style="color:#2c2c44">=LogPoint</span></div>
<svg style="left:1184.6px;top:993.7px" width="14" height="10" viewBox="0 0 14 10"><path d="M1 1.5 L7 7.8 L13 1.5" fill="none" stroke="#9a9db6" stroke-width="2"/></svg>
<div style="left:1207.9px;top:988.7px;width:2.0px;height:23.0px;background:#d6c8d8;"></div>
<div style="left:575.73px;top:1029.50px;font-size:24px;line-height:24px;color:#55555f;font-weight:400;transform:scaleX(1.0713);transform-origin:0 0;">2021-07-23 08:48:53 Benchmarker; reporting speed; service=normalizer_3; actual_mps=0; doable_mps=931;</div>
<div style="left:575.73px;top:1137.30px;font-size:24px;line-height:24px;color:#55555f;font-weight:400;transform:scaleX(1.0716);transform-origin:0 0;">2021/07/23 08:48:53</div>
<div style="left:575.95px;top:1167.80px;font-size:26px;line-height:26px;color:#4d5278;font-weight:400;transform:scaleX(1.0263);transform-origin:0 0;">Benchmarker</div>
<div style="left:753.5px;top:1171.5px;width:2.0px;height:24.0px;background:#dccfdc;"></div>
<div style="left:774.90px;top:1167.80px;font-size:26px;line-height:26px;color:#4d5278;font-weight:400;transform:scaleX(1.0525);transform-origin:0 0;">LogPoint</div>
<div style="left:576px;top:1208.0px;width:2266px;height:125.3px;background:#eaeaf0;"></div>
<div style="left:583.14px;top:1219.20px;font-size:24px;line-height:24px;color:#2c2c44;font-weight:400;transform:scaleX(1.0776);transform-origin:0 0;"><span style="color:#4b8fa0">log_ts</span><span style="color:#2c2c44">=2021/07/23 08:48:53</span></div>
<svg style="left:910px;top:1227.5px" width="14" height="10" viewBox="0 0 14 10"><path d="M1 1.5 L7 7.8 L13 1.5" fill="none" stroke="#9a9db6" stroke-width="2"/></svg>
<div style="left:934.1px;top:1222.5px;width:2.0px;height:23.0px;background:#d6c8d8;"></div>
<div style="left:946.94px;top:1219.20px;font-size:24px;line-height:24px;color:#2c2c44;font-weight:400;transform:scaleX(1.0584);transform-origin:0 0;"><span style="color:#4b8fa0">device_ip</span><span style="color:#2c2c44">=127.0.0.1</span></div>
<svg style="left:1183px;top:1227.5px" width="14" height="10" viewBox="0 0 14 10"><path d="M1 1.5 L7 7.8 L13 1.5" fill="none" stroke="#9a9db6" stroke-width="2"/></svg>
<div style="left:1206.5px;top:1222.5px;width:2.0px;height:23.0px;background:#d6c8d8;"></div>
<div style="left:1220.14px;top:1219.20px;font-size:24px;line-height:24px;color:#2c2c44;font-weight:400;transform:scaleX(1.0564);transform-origin:0 0;"><span style="color:#4b8fa0">device_name</span><span style="color:#2c2c44">=localhost</span></div>
<svg style="left:1492px;top:1227.5px" width="14" height="10" viewBox="0 0 14 10"><path d="M1 1.5 L7 7.8 L13 1.5" fill="none" stroke="#9a9db6" stroke-width="2"/></svg>
<div style="left:1515.6px;top:1222.5px;width:2.0px;height:23.0px;background:#d6c8d8;"></div>
<div style="left:1528.23px;top:1219.20px;font-size:24px;line-height:24px;color:#2c2c44;font-weight:400;transform:scaleX(1.0659);transform-origin:0 0;"><span style="color:#4b8fa0">col_type</span><span style="color:#2c2c44">=filesystem</span></div>
<svg style="left:1758px;top:1227.5px" width="14" height="10" viewBox="0 0 14 10"><path d="M1 1.5 L7 7.8 L13 1.5" fill="none" stroke="#9a9db6" stroke-width="2"/></svg>
<div style="left:1782px;top:1222.5px;width:2px;height:23.0px;background:#d6c8d8;"></div>
<div style="left:1794.94px;top:1219.20px;font-size:24px;line-height:24px;color:#2c2c44;font-weight:400;transform:scaleX(1.0634);transform-origin:0 0;"><span style="color:#4b8fa0">sig_id</span><span style="color:#2c2c44">=10505</span></div>
<svg style="left:1953px;top:1227.5px" width="14" height="10" viewBox="0 0 14 10"><path d="M1 1.5 L7 7.8 L13 1.5" fill="none" stroke="#9a9db6" stroke-width="2"/></svg>
<div style="left:1978px;top:1222.5px;width:2px;height:23.0px;background:#d6c8d8;"></div>
<div style="left:1990.72px;top:1219.20px;font-size:24px;line-height:24px;color:#2c2c44;font-weight:400;transform:scaleX(1.0836);transform-origin:0 0;"><span style="color:#4b8fa0">source_name</span><span style="color:#2c2c44">=/opt/immune/var/log/benchma...</span></div>
<svg style="left:2533px;top:1227.5px" width="14" height="10" viewBox="0 0 14 10"><path d="M1 1.5 L7 7.8 L13 1.5" fill="none" stroke="#9a9db6" stroke-width="2"/></svg>
<div style="left:2557px;top:1222.5px;width:2px;height:23.0px;background:#d6c8d8;"></div>
<div style="left:2569.34px;top:1219.20px;font-size:24px;line-height:24px;color:#2c2c44;font-weight:400;transform:scaleX(1.0810);transform-origin:0 0;"><span style="color:#4b8fa0">repo_name</span><span style="color:#2c2c44">=_logpoint</span></div>
<svg style="left:585.3px;top:1265.5px" width="14" height="10" viewBox="0 0 14 10"><path d="M1 1.5 L7 7.8 L13 1.5" fill="none" stroke="#9a9db6" stroke-width="2"/></svg>
<div style="left:609px;top:1260.5px;width:2px;height:23.0px;background:#d6c8d8;"></div>
<div style="left:621.70px;top:1257.20px;font-size:24px;line-height:24px;color:#2c2c44;font-weight:400;transform:scaleX(1.0963);transform-origin:0 0;"><span style="color:#4b8fa0">action</span><span style="color:#2c2c44">=reporting speed</span></div>
<svg style="left:894.7px;top:1265.5px" width="14" height="10" viewBox="0 0 14 10"><path d="M1 1.5 L7 7.8 L13 1.5" fill="none" stroke="#9a9db6" stroke-width="2"/></svg>
<div style="left:918.3px;top:1260.5px;width:2.0px;height:23.0px;background:#d6c8d8;"></div>
<div style="left:931.14px;top:1257.20px;font-size:24px;line-height:24px;color:#2c2c44;font-weight:400;transform:scaleX(1.0627);transform-origin:0 0;"><span style="color:#4b8fa0">object</span><span style="color:#2c2c44">=Benchmarker</span></div>
<svg style="left:1172.4px;top:1265.5px" width="14" height="10" viewBox="0 0 14 10"><path d="M1 1.5 L7 7.8 L13 1.5" fill="none" stroke="#9a9db6" stroke-width="2"/></svg>
<div style="left:1196px;top:1260.5px;width:2px;height:23.0px;background:#d6c8d8;"></div>
<div style="left:1209.26px;top:1257.20px;font-size:24px;line-height:24px;color:#2c2c44;font-weight:400;transform:scaleX(1.0414);transform-origin:0 0;"><span style="color:#4b8fa0">service</span><span style="color:#2c2c44">=normalizer_0</span></div>
<svg style="left:1454px;top:1265.5px" width="14" height="10" viewBox="0 0 14 10"><path d="M1 1.5 L7 7.8 L13 1.5" fill="none" stroke="#9a9db6" stroke-width="2"/></svg>
<div style="left:1477.5px;top:1260.5px;width:2.0px;height:23.0px;background:#d6c8d8;"></div>
<div style="left:1490.25px;top:1257.20px;font-size:24px;line-height:24px;color:#2c2c44;font-weight:400;transform:scaleX(1.0520);transform-origin:0 0;"><span style="color:#4b8fa0">actual_mps</span><span style="color:#2c2c44">=0</span></div>
<svg style="left:1654px;top:1265.5px" width="14" height="10" viewBox="0 0 14 10"><path d="M1 1.5 L7 7.8 L13 1.5" fill="none" stroke="#9a9db6" stroke-width="2"/></svg>
<div style="left:1677.3px;top:1260.5px;width:2.0px;height:23.0px;background:#d6c8d8;"></div>
<div style="left:1690.23px;top:1257.20px;font-size:24px;line-height:24px;color:#2c2c44;font-weight:400;transform:scaleX(1.0695);transform-origin:0 0;"><span style="color:#4b8fa0">col_ts</span><span style="color:#2c2c44">=2021/07/23 08:48:53</span></div>
<svg style="left:2015px;top:1265.5px" width="14" height="10" viewBox="0 0 14 10"><path d="M1 1.5 L7 7.8 L13 1.5" fill="none" stroke="#9a9db6" stroke-width="2"/></svg>
<div style="left:2037.9px;top:1260.5px;width:2.0px;height:23.0px;background:#d6c8d8;"></div>
<div style="left:2051.13px;top:1257.20px;font-size:24px;line-height:24px;color:#2c2c44;font-weight:400;transform:scaleX(1.0660);transform-origin:0 0;"><span style="color:#4b8fa0">collected_at</span><span style="color:#2c2c44">=LogPoint_153</span></div>
<svg style="left:2366px;top:1265.5px" width="14" height="10" viewBox="0 0 14 10"><path d="M1 1.5 L7 7.8 L13 1.5" fill="none" stroke="#9a9db6" stroke-width="2"/></svg>
<div style="left:2389.8px;top:1260.5px;width:2.0px;height:23.0px;background:#d6c8d8;"></div>
<div style="left:2403.13px;top:1257.20px;font-size:24px;line-height:24px;color:#2c2c44;font-weight:400;transform:scaleX(1.0689);transform-origin:0 0;"><span style="color:#4b8fa0">doable_mps</span><span style="color:#2c2c44">=1670</span></div>
<svg style="left:2620.6px;top:1265.5px" width="14" height="10" viewBox="0 0 14 10"><path d="M1 1.5 L7 7.8 L13 1.5" fill="none" stroke="#9a9db6" stroke-width="2"/></svg>
<div style="left:2643.7px;top:1260.5px;width:2.0px;height:23.0px;background:#d6c8d8;"></div>
<div style="left:583.16px;top:1294.90px;font-size:24px;line-height:24px;color:#2c2c44;font-weight:400;transform:scaleX(1.0675);transform-origin:0 0;"><span style="color:#4b8fa0">logpoint_name</span><span style="color:#2c2c44">=LogPoint_153</span></div>
<svg style="left:930.4px;top:1303.2px" width="14" height="10" viewBox="0 0 14 10"><path d="M1 1.5 L7 7.8 L13 1.5" fill="none" stroke="#9a9db6" stroke-width="2"/></svg>
<div style="left:955px;top:1298.2px;width:2px;height:23.0px;background:#d6c8d8;"></div>
<div style="left:966.42px;top:1294.90px;font-size:24px;line-height:24px;color:#2c2c44;font-weight:400;transform:scaleX(1.0876);transform-origin:0 0;"><span style="color:#4b8fa0">norm_id</span><span style="color:#2c2c44">=LogPoint</span></div>
<svg style="left:1184.6px;top:1303.2px" width="14" height="10" viewBox="0 0 14 10"><path d="M1 1.5 L7 7.8 L13 1.5" fill="none" stroke="#9a9db6" stroke-width="2"/></svg>
<div style="left:1207.9px;top:1298.2px;width:2.0px;height:23.0px;background:#d6c8d8;"></div>
<div style="left:575.73px;top:1339.00px;font-size:24px;line-height:24px;color:#55555f;font-weight:400;transform:scaleX(1.0712);transform-origin:0 0;">2021-07-23 08:48:53 Benchmarker; reporting speed; service=normalizer_0; actual_mps=0; doable_mps=1670;</div>
<div style="left:534px;top:1402px;width:2348px;height:72px;background:#e6e6ec;"></div>
<div style="left:556px;top:1422px;width:31.5px;height:31.4px;background:#ececf2;"></div>
<div style="left:616px;top:1422px;width:32px;height:31.4px;background:#ececf2;"></div>
<svg style="left:556px;top:1422px" width="32" height="32" viewBox="0 0 32 32"><path d="M17 7.5 L8.5 16.5 L17 25.5 M25 7.5 L16.5 16.5 L25 25.5" fill="none" stroke="#9a9cb0" stroke-width="2.8"/></svg>
<svg style="left:616px;top:1422px" width="32" height="32" viewBox="0 0 32 32"><path d="M21 7.5 L12.5 16.5 L21 25.5" fill="none" stroke="#9a9cb0" stroke-width="2.8"/></svg>
<div style="left:670px;top:1414px;width:70px;height:47.7px;background:#ffffff;"></div>
<div style="left:682.00px;top:1425.09px;font-size:22px;line-height:22px;color:#4d5278;font-weight:400;">1</div>
<div style="left:763.93px;top:1422.89px;font-size:22px;line-height:22px;color:#3b3e5c;font-weight:400;transform:scaleX(1.0708);transform-origin:0 0;">of 36 pages</div>
<svg style="left:906px;top:1422px" width="28" height="32" viewBox="0 0 28 32"><path d="M9.5 8.5 L18 17 L9.5 25.5" fill="none" stroke="#5a5660" stroke-width="2.8"/></svg>
<svg style="left:964px;top:1422px" width="32" height="32" viewBox="0 0 32 32"><path d="M7.5 7.5 L16 16.5 L7.5 25.5 M15.5 7.5 L24 16.5 L15.5 25.5" fill="none" stroke="#5a5660" stroke-width="2.8"/></svg>
<div style="left:1865.84px;top:1423.69px;font-size:22px;line-height:22px;color:#3b3e5c;font-weight:400;transform:scaleX(1.0787);transform-origin:0 0;">Displaying 1-25 of 880 logs</div>
<svg style="left:2170px;top:1422px" width="32" height="32" viewBox="0 0 32 32"><circle cx="15.9" cy="15.5" r="15" fill="#5a5660"/><circle cx="15.9" cy="8.8" r="2.2" fill="#fff"/><path d="M12.3 12.6 H17.6 V21 H19.5 V23.6 H12.3 V21 H14.2 V15.2 H12.3 Z" fill="#fff"/></svg>
<div style="left:2255.99px;top:1423.69px;font-size:22px;line-height:22px;color:#6a6a78;font-weight:400;transform:scaleX(1.1574);transform-origin:0 0;">Display maximum:</div>
<div style="left:2473.5px;top:1414px;width:230.5px;height:47.6px;background:#ffffff;"></div>
<div style="left:2485.00px;top:1423.69px;font-size:22px;line-height:22px;color:#4d5278;font-weight:400;">25</div>
<svg style="left:2673px;top:1431px" width="19" height="10" viewBox="0 0 19 10"><path d="M0 0 L19 0 L9.5 10 Z" fill="#9499b4" stroke="#9499b4" stroke-width="1" stroke-linejoin="round"/></svg>
<div style="left:2727.91px;top:1423.69px;font-size:22px;line-height:22px;color:#3b3e5c;font-weight:400;transform:scaleX(1.0893);transform-origin:0 0;">logs per page</div>
</body></html>
